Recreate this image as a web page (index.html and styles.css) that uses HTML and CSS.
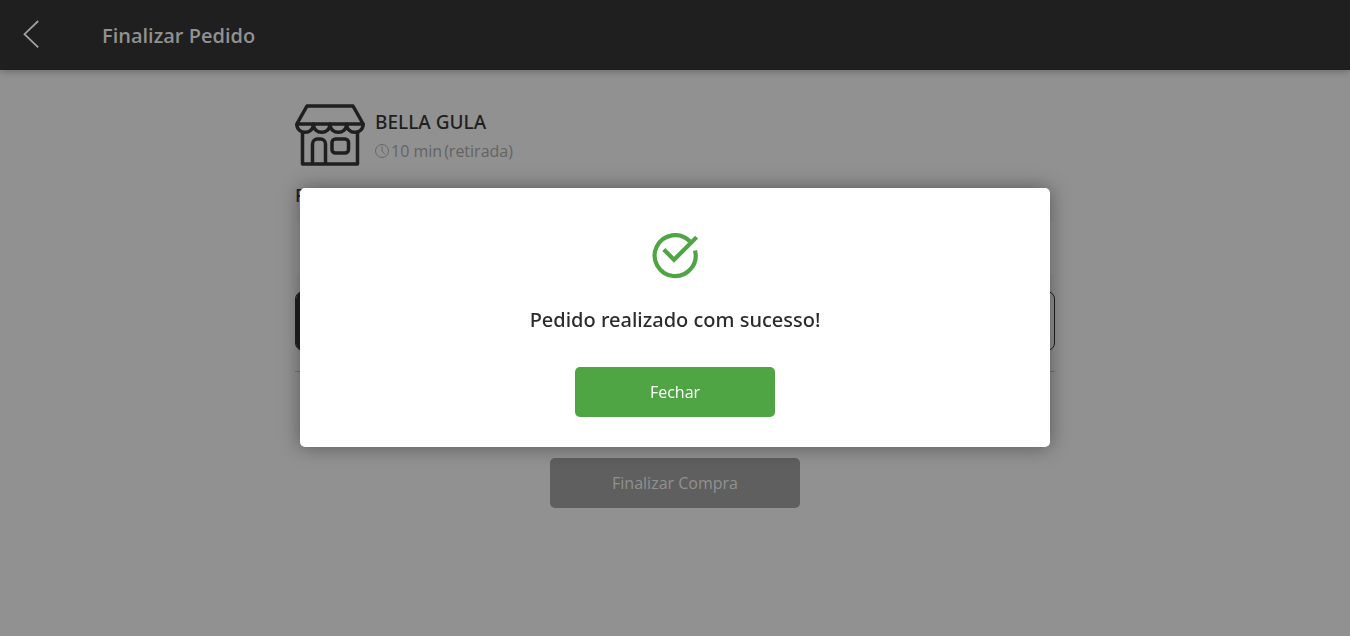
FILE: index.html
```html
<!DOCTYPE html>
<html lang="pt-BR">
<head>
<meta charset="utf-8">
<title>Finalizar Pedido</title>
<meta name="viewport" content="width=device-width, initial-scale=1">
<link rel="stylesheet" href="styles.css">
</head>
<body>
<header class="topbar">
  <a class="back" href="#" aria-label="Voltar">
    <svg width="16" height="30" viewBox="0 0 16 30" fill="none" stroke="currentColor" stroke-width="1.8"><path d="M15.2 1 1.5 14.2 15.2 27.4"/></svg>
  </a>
  <h1 class="topbar-title">Finalizar Pedido</h1>
</header>
<main class="checkout">
  <section class="store">
    <svg class="store-icon" width="70" height="62" viewBox="0 0 70 62" fill="none" stroke="currentColor" stroke-width="3.5" stroke-linejoin="round">
      <path d="M12 2H58L68.2 20H1.8Z"/>
      <path d="M1.8 20C1.8 31 18.4 31 18.4 20C18.4 31 35 31 35 20C35 31 51.6 31 51.6 20C51.6 31 68.2 31 68.2 20"/>
      <path d="M7.5 28V60H62.5V28"/>
      <path d="M17.5 60V40a5 5 0 0 1 5-5h3a5 5 0 0 1 5 5V60"/>
      <rect x="37" y="35" width="16.5" height="14" rx="3.5"/>
    </svg>
    <div class="store-info">
      <h2 class="store-name">BELLA GULA</h2>
      <p class="store-time">
        <svg width="14" height="14" viewBox="0 0 14 14" fill="none" stroke="currentColor" stroke-width="0.9"><circle cx="7" cy="7" r="6.5"/><path d="M7 2.5V7l3 3.5"/></svg>
        <span>10 min</span><span>(retirada)</span>
      </p>
    </div>
  </section>
  <h3 class="section-title">Forma de entrega</h3>
  <div class="panel"></div>
  <div class="options"><div class="option-on"></div></div>
  <hr class="rule">
  <button class="submit" type="button">Finalizar Compra</button>
</main>
<div class="overlay">
  <div class="dialog" role="dialog" aria-modal="true" aria-labelledby="dialog-title">
    <svg class="check" width="46" height="46" viewBox="0 0 46 46" fill="none" stroke="currentColor" stroke-width="4.2">
      <path d="M38 8.5A20.5 20.5 0 1 0 43 17.5"/>
      <path d="M11.8 16.5 22 26.8 44.6 4.2"/>
    </svg>
    <h2 class="dialog-title" id="dialog-title">Pedido realizado com sucesso!</h2>
    <button class="close" type="button">Fechar</button>
  </div>
</div>
</body>
</html>
```
FILE: styles.css
```css
* { box-sizing: border-box; }
body {
  margin: 0;
  min-height: 100vh;
  background: #919191;
  color: #1f1f1f;
  font-family: "Open Sans", sans-serif;
  font-size: 16px;
}
h1, h2, h3, p { margin: 0; }
button { border: 0; font: inherit; border-radius: 5px; height: 50px; }
.topbar {
  display: flex;
  align-items: center;
  gap: 63px;
  height: 70px;
  padding: 0 23px;
  background: #1f1f1f;
  color: #919191;
  box-shadow: 0 1px 8px rgba(0, 0, 0, 0.3);
}
.back { display: flex; color: #a0a0a0; }
.topbar-title { padding-top: 2px; font-size: 20px; line-height: 28px; font-weight: 600; }
.checkout {
  display: flex;
  flex-direction: column;
  width: 100%;
  max-width: 760px;
  margin: 0 auto;
  padding-top: 34px;
}
.store { display: flex; align-items: center; gap: 10px; height: 62px; }
.store-info { padding-top: 2px; }
.store-name,
.section-title,
.dialog-title { font-family: "Noto Sans", "Open Sans", sans-serif; font-weight: 500; }
.store-name { font-size: 19px; line-height: 30px; }
.store-time {
  display: flex;
  align-items: center;
  gap: 2px;
  line-height: 28px;
  color: #636363;
}
.section-title { margin-top: 17px; font-size: 18px; line-height: 24px; }
.panel { height: 54px; margin-top: 14px; background: #959595; }
.options {
  height: 60px;
  margin-top: 16px;
  border: 1px solid #1f1f1f;
  border-radius: 8px;
  overflow: hidden;
}
.option-on { width: 50%; height: 100%; background: #1f1f1f; }
.rule { width: 100%; height: 1px; margin: 20px 0 86px; border: 0; background: #747474; }
.submit { align-self: center; width: 250px; background: #5f5f5f; color: #919191; }
.overlay {
  position: fixed;
  inset: 0;
  display: flex;
  align-items: center;
  justify-content: center;
  padding-bottom: 1px;
}
.dialog {
  display: flex;
  flex-direction: column;
  align-items: center;
  width: 100%;
  max-width: 750px;
  padding: 45px 20px 30px;
  border-radius: 5px;
  background: #fff;
  box-shadow: 0 0 20px rgba(0, 0, 0, 0.4);
}
.check { color: #4fa543; }
.dialog-title {
  margin: 27px 0 33px;
  color: #2c2c2c;
  font-size: 20px;
  line-height: 28px;
}
.close { width: 200px; background: #4fa543; color: #fff; }
```
